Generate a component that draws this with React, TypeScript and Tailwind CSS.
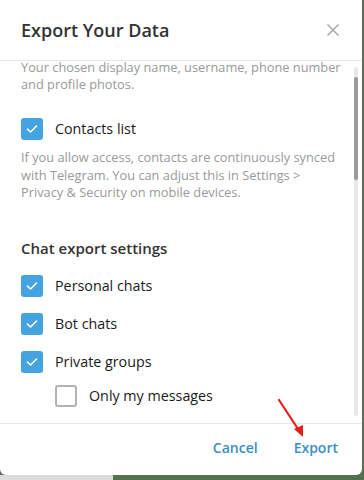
function Box({ checked }: { checked: boolean }) {
  if (!checked) {
    return <div className="w-[22px] h-[22px] shrink-0 rounded-[3px] border-2 border-[#b3b3b3] bg-white" />;
  }
  return (
    <div className="w-[22px] h-[22px] shrink-0 rounded-[3px] bg-[#45a3e0] flex items-center justify-center">
      <svg width="12" height="10" viewBox="0 0 12 10" fill="none">
        <path d="M1.5 5.2 L4.6 8 L10.5 2" stroke="white" strokeWidth="1.6" strokeLinecap="round" strokeLinejoin="round" />
      </svg>
    </div>
  );
}

function Option({ label, checked, className = '' }: { label: string; checked: boolean; className?: string }) {
  return (
    <div className={`flex items-center gap-[12px] h-[22px] ${className}`}>
      <Box checked={checked} />
      <span className="text-[14.3px] text-[#1a1a1a]">{label}</span>
    </div>
  );
}

export default function App() {
  return (
    <div className="w-[364px] h-[480px] bg-[#53704f] flex flex-col overflow-hidden relative" style={{ fontFamily: '"Open Sans", sans-serif' }}>
      <div className="flex h-[475px]">
        <div className="w-[362px] h-full bg-white rounded-b-[6px] flex flex-col">
          {/* Header */}
          <div className="h-[61px] shrink-0 border-b border-[#e8e8e8] flex items-center justify-between pl-[21px] pr-[23px]">
            <h1 className="text-[18px] font-semibold text-[#333]">Export Your Data</h1>
            <svg width="12" height="12" viewBox="0 0 12 12" fill="none" className="mt-[-1px]">
              <path d="M0.5 0.5 L11.5 11.5 M11.5 0.5 L0.5 11.5" stroke="#a3a3a3" strokeWidth="1.4" />
            </svg>
          </div>

          {/* Scrolled content */}
          <div className="flex-1 flex overflow-hidden">
            <div className="flex-1 overflow-hidden pl-[21px] pr-[13px]">
              <p className="mt-[-2.5px] text-[12.8px] leading-[17.5px] text-[#999]">
                Your chosen display name, username, phone number and profile photos.
              </p>
              <Option className="mt-[24.5px]" label="Contacts list" checked />
              <p className="mt-[9px] text-[12.8px] leading-[17.5px] text-[#999]">
                If you allow access, contacts are continuously synced with Telegram. You can adjust this in Settings &gt; Privacy &amp; Security on mobile devices.
              </p>
              <h2 className="mt-[36px] text-[15px] leading-[20px] font-semibold text-[#333]">Chat export settings</h2>
              <Option className="mt-[17px]" label="Personal chats" checked />
              <Option className="mt-[16px]" label="Bot chats" checked />
              <Option className="mt-[16px]" label="Private groups" checked />
              <Option className="mt-[12px] ml-[34px]" label="Only my messages" checked={false} />
            </div>
            <div className="w-[4px] mr-[4px] mt-[6px] mb-[7px] rounded-full bg-[#e8e8e8] flex flex-col">
              <div className="mt-[10px] h-[103px] rounded-full bg-[#9a9a9a]" />
            </div>
          </div>

          {/* Footer */}
          <div className="h-[52px] shrink-0 border-t border-[#e8e8e8] flex items-center justify-end gap-[36px] pr-[24px] pb-[4px]">
            <button className="text-[14px] font-semibold text-[#3b8dc9]">Cancel</button>
            <button className="text-[14px] font-semibold text-[#3b8dc9]">Export</button>
          </div>
        </div>
        <div className="flex-1 bg-[#56704f]" />
      </div>
      <div className="flex flex-1">
        <div className="w-[113px] bg-[#dcdcdc]" />
        <div className="flex-1 bg-[#53704f]" />
      </div>

      {/* annotation arrow */}
      <svg className="absolute left-[274px] top-[396px]" width="36" height="46" viewBox="0 0 36 46" fill="none">
        <path d="M5 4 L26 36" stroke="#e3201b" strokeWidth="2.2" strokeLinecap="round" />
        <path d="M29 41 L20 33 L29 29 Z" fill="#e3201b" />
      </svg>
    </div>
  );
}
